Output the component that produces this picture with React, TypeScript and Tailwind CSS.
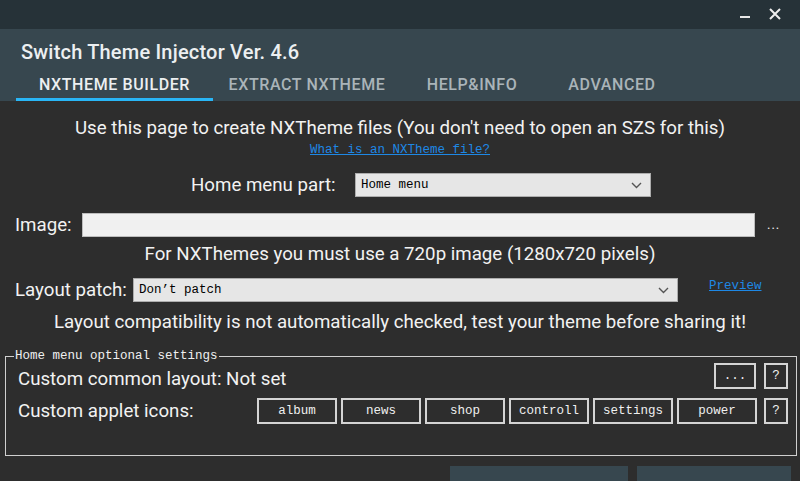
import React from "react"

const ui = "font-['Roboto','Liberation_Sans',sans-serif]"
const mono = "font-['Liberation_Mono','DejaVu_Sans_Mono',monospace]"

function Chevron() {
  return (
    <svg width="11" height="7" viewBox="0 0 11 7" className="shrink-0">
      <polyline points="1,1 5.5,5.5 10,1" fill="none" stroke="#555" strokeWidth="1.4" />
    </svg>
  )
}

function Select({ value, width }: { value: string; width: string }) {
  return (
    <div className={`${width} h-[24px] bg-[#e6e6e6] border border-[#adadad] flex items-center justify-between pl-[5px] pr-[8px]`}>
      <span className={`${mono} text-[12.5px] text-black`}>{value}</span>
      <Chevron />
    </div>
  )
}

function OutlineButton({ label, width }: { label: string; width: string }) {
  return (
    <div className={`${width} h-[26px] border-2 border-[#d4d4d4] flex items-center justify-center ${mono} text-[12.5px] text-[#f0f0f0]`}>
      {label}
    </div>
  )
}

const tabs = [
  { label: "NXTHEME BUILDER", w: "w-[197px]", active: true },
  { label: "EXTRACT NXTHEME", w: "w-[188px]", active: false },
  { label: "HELP&INFO", w: "w-[142px]", active: false },
  { label: "ADVANCED", w: "w-[138px]", active: false },
]

export default function App() {
  return (
    <div className={`w-[800px] h-[481px] bg-[#2d2d2d] overflow-hidden flex flex-col ${ui}`}>
      {/* title bar */}
      <div className="h-[29px] bg-[#263238] flex items-center justify-end pr-[19px] gap-[19px] shrink-0">
        <div className="w-[10px] h-[2px] bg-[#e6e6e6] mt-[4px]" />
        <svg width="12" height="12" viewBox="0 0 12 12" className="-mt-[1px]">
          <path d="M1 1L11 11M11 1L1 11" stroke="#eeeeee" strokeWidth="2" />
        </svg>
      </div>

      {/* header */}
      <div className="h-[72px] bg-[#37474f] shrink-0 flex flex-col">
        <div className="pl-[21px] pt-[11px] text-[20px] leading-[24px] font-medium text-[#eceff1] tracking-[0.2px]">
          Switch Theme Injector Ver. 4.6
        </div>
        <div className="flex pl-[16px] mt-[6px] h-[31px]">
          {tabs.map((t) => (
            <div
              key={t.label}
              className={`${t.w} flex items-center justify-center pt-[1px] text-[16px] font-medium tracking-[0.6px] ${
                t.active ? "text-[#eceff1] border-b-[3px] border-[#29b6f6]" : "text-[#aab4b9] border-b-[3px] border-transparent"
              }`}
            >
              {t.label}
            </div>
          ))}
        </div>
      </div>

      {/* body */}
      <div className="flex flex-col text-[#f2f2f2] text-[18.7px]">
        <div className="mt-[16px] h-[22px] leading-[22px] text-center">
          Use this page to create NXTheme files (You don&apos;t need to open an SZS for this)
        </div>
        <div className={`mt-[3px] h-[16px] leading-[16px] text-center ${mono} text-[12.5px] text-[#1e88e5] underline`}>
          What is an NXTheme file?
        </div>

        <div className="mt-[15px] flex items-center pl-[191px]">
          <span className="w-[164px] leading-[22px]">Home menu part:</span>
          <Select value="Home menu" width="w-[296px]" />
        </div>

        <div className="mt-[16px] flex items-center pl-[15px]">
          <span className="w-[67px] leading-[22px]">Image:</span>
          <div className="w-[673px] h-[24px] bg-[#f0f0f0] border border-[#bdbdbd]" />
          <span className="ml-[12px] text-[13px] leading-[13px] tracking-[1px] -mt-[2px]">...</span>
        </div>

        <div className="mt-[6px] h-[22px] leading-[22px] text-center">
          For NXThemes you must use a 720p image (1280x720 pixels)
        </div>

        <div className="mt-[13px] flex items-center pl-[15px]">
          <span className="w-[118px] leading-[22px]">Layout patch:</span>
          <Select value="Don’t patch" width="w-[545px]" />
          <span className={`ml-[31px] -mt-[8px] ${mono} text-[12.5px] text-[#1e88e5] underline`}>Preview</span>
        </div>

        <div className="mt-[9px] h-[22px] leading-[22px] text-center">
          Layout compatibility is not automatically checked, test your theme before sharing it!
        </div>

        <fieldset className="mt-[17px] ml-[5px] w-[792px] h-[106px] border border-[#cfcfcf] pl-[12px] pr-[8px]">
          <legend className={`-ml-[4px] px-[1px] ${mono} text-[12.5px] leading-[12px] text-[#f0f0f0]`}>
            Home menu optional settings
          </legend>
          <div className="flex items-center">
            <span className="flex-1 leading-[22px] pt-[6px]">Custom common layout: Not set</span>
            <OutlineButton label="..." width="w-[42px]" />
            <div className="w-[8px]" />
            <OutlineButton label="?" width="w-[24px]" />
          </div>
          <div className="flex items-center mt-[8px]">
            <span className="flex-1 leading-[22px]">Custom applet icons:</span>
            <div className="flex gap-[4px]">
              {["album", "news", "shop", "controll", "settings", "power"].map((b) => (
                <OutlineButton key={b} label={b} width="w-[80px]" />
              ))}
            </div>
            <div className="w-[7px]" />
            <OutlineButton label="?" width="w-[24px]" />
          </div>
        </fieldset>

        <div className="mt-[10px] flex pl-[450px] gap-[9px]">
          <div className="w-[178px] h-[30px] bg-[#37474f]" />
          <div className="w-[154px] h-[30px] bg-[#37474f]" />
        </div>
      </div>
    </div>
  )
}
